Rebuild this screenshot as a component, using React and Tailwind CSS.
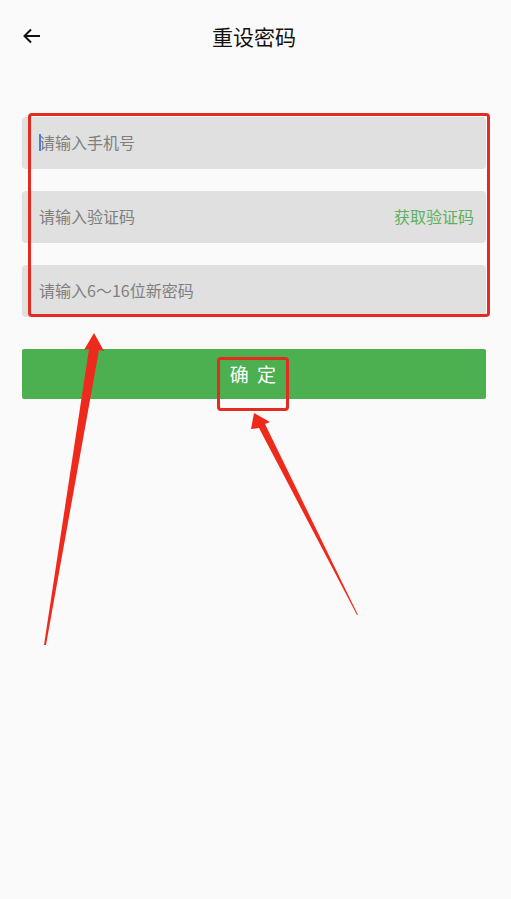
import React from "react";

const font = { fontFamily: '"Noto Sans CJK SC", "Noto Sans", sans-serif' };

function Field({ placeholder, right, cursor }) {
  return (
    <div className="flex h-[52px] items-center rounded-[4px] bg-[#e0e0e0] pb-[2px] pl-[17px] pr-[12px]">
      {cursor && <span className="mr-[-2px] h-[17px] w-[2px] bg-[#3b82f6]" />}
      <span className="flex-1 text-[16px] text-[#7f7f7f]">{placeholder}</span>
      {right && <span className="text-[16px] text-[#5cb05f]">{right}</span>}
    </div>
  );
}

export default function App() {
  return (
    <div className="relative min-h-[899px] w-full bg-[#fafafa]" style={font}>
      <div className="relative flex h-[74px] items-center justify-center pr-[3px]">
        <svg className="absolute left-[23px] top-[28px]" width="18" height="16" viewBox="0 0 18 16" fill="none">
          <path d="M17 8H2M8 1.5L1.5 8L8 14.5" stroke="#111" strokeWidth="2" />
        </svg>
        <span className="text-[21px] text-[#111]">重设密码</span>
      </div>
      <div className="flex flex-col gap-[22px] pl-[22px] pr-[25px] pt-[43px]">
        <Field placeholder="请输入手机号" cursor />
        <Field placeholder="请输入验证码" right="获取验证码" />
        <Field placeholder="请输入6～16位新密码" />
      </div>
      <div className="pl-[22px] pr-[25px] pt-[32px]">
        <div className="flex h-[50px] items-center justify-center rounded-[2px] bg-[#4caf50] text-[19px] tracking-[2px] text-white">
          确 定
        </div>
      </div>

      {/* annotation overlay */}
      <div className="pointer-events-none absolute left-[28px] top-[113px] h-[204px] w-[462px] rounded-[4px] border-[3px] border-[#e32b22]" />
      <div className="pointer-events-none absolute left-[217px] top-[357px] h-[54px] w-[72px] rounded-[4px] border-[3px] border-[#e32b22]" />
      <svg className="pointer-events-none absolute left-0 top-0" width="511" height="899" viewBox="0 0 511 899">
        <polygon points="94,333 104,351 99,350 46,645 44,645 89,349 84,350" fill="#ee2a1c" />
        <polygon points="254,413 270,422 265,424 358,615 357,615 259,428 251,429" fill="#ee2a1c" />
      </svg>
    </div>
  );
}
